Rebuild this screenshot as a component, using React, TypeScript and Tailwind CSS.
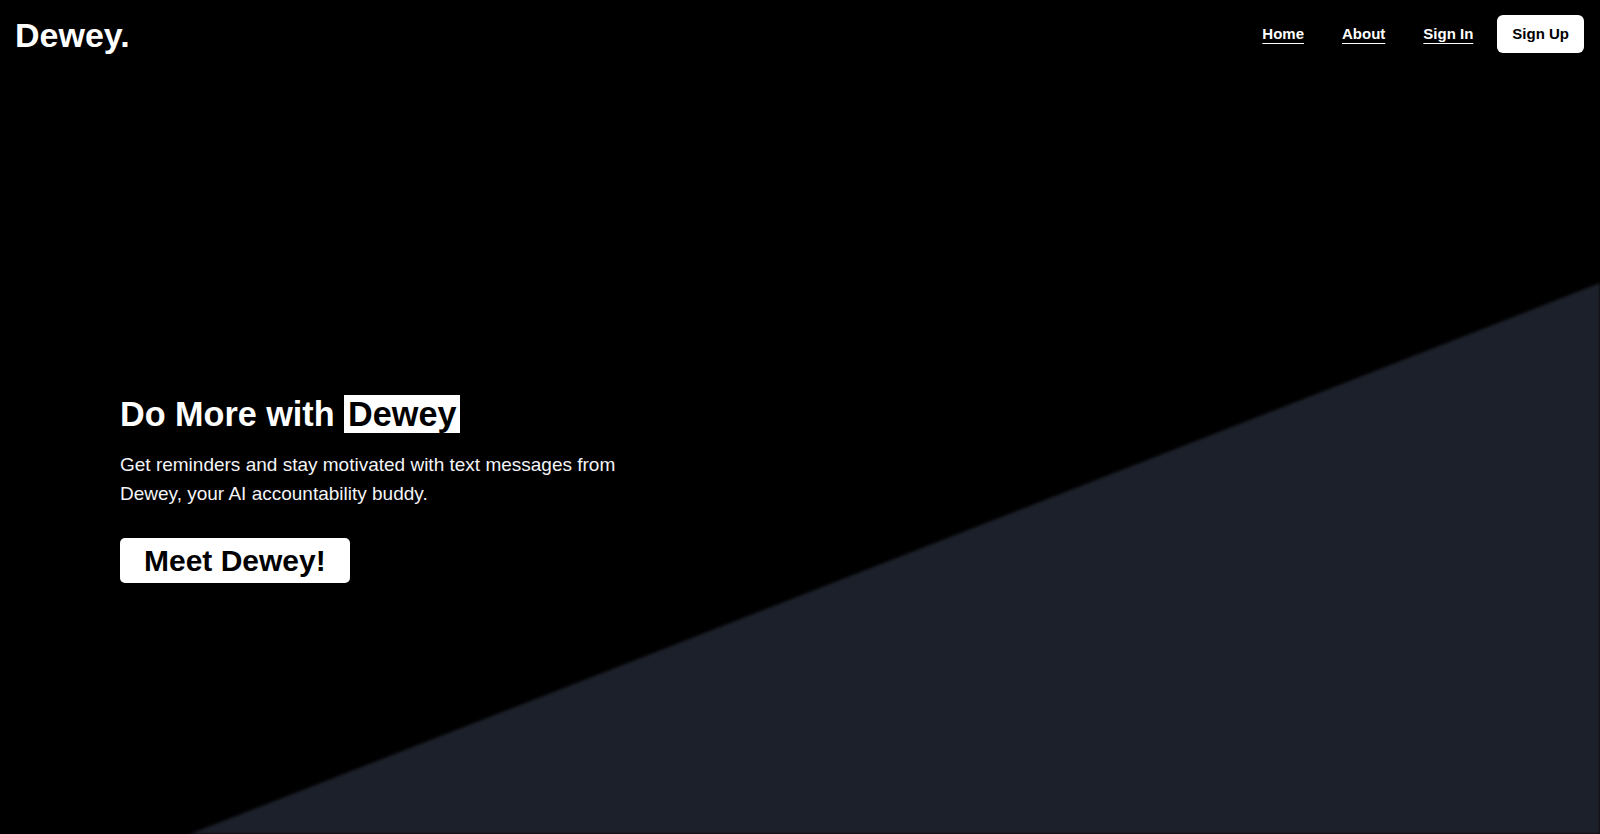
import React from 'react'

const navLinks = ['Home', 'About', 'Sign In']

const App = () => {
  return (
    <div className="relative h-[834px] w-full overflow-hidden bg-black text-white font-['Liberation_Sans',Arial,sans-serif]">
      {/* Diagonal backdrop */}
      <div className="pointer-events-none absolute inset-0 blur-[1.5px]">
        <div className="h-full w-full bg-[#1c202a] [clip-path:polygon(100%_33.93%,100%_100%,11.875%_100%)]" />
      </div>

      {/* Header */}
      <header className="relative flex h-[68px] items-center justify-between pl-[15px] pr-4">
        <div className="mt-[2px] text-[34px] font-bold leading-normal">Dewey.</div>
        <nav className="flex items-center">
          <div className="flex items-center gap-[38px]">
            {navLinks.map((link) => (
              <a
                key={link}
                href="#"
                className="text-[15px] font-bold leading-normal underline underline-offset-4"
              >
                {link}
              </a>
            ))}
          </div>
          <button className="ml-6 h-[38px] rounded-md bg-white px-[15px] text-[15px] font-bold text-black">
            Sign Up
          </button>
        </nav>
      </header>

      {/* Hero */}
      <main className="relative pl-[120px] pt-[326px]">
        <h1 className="text-[34.2px] font-bold leading-[1.2]">
          Do More with <span className="bg-white px-1 text-black">Dewey</span>
        </h1>
        <p className="mt-4 max-w-[512px] text-[19px] leading-[1.5] text-gray-100">
          Get reminders and stay motivated with text messages from Dewey, your AI accountability buddy.
        </p>
        <button className="mt-[30px] h-[45px] rounded-[5px] bg-white px-[24px] text-[30px] font-bold leading-none text-black">
          Meet Dewey!
        </button>
      </main>
    </div>
  )
}

export default App
